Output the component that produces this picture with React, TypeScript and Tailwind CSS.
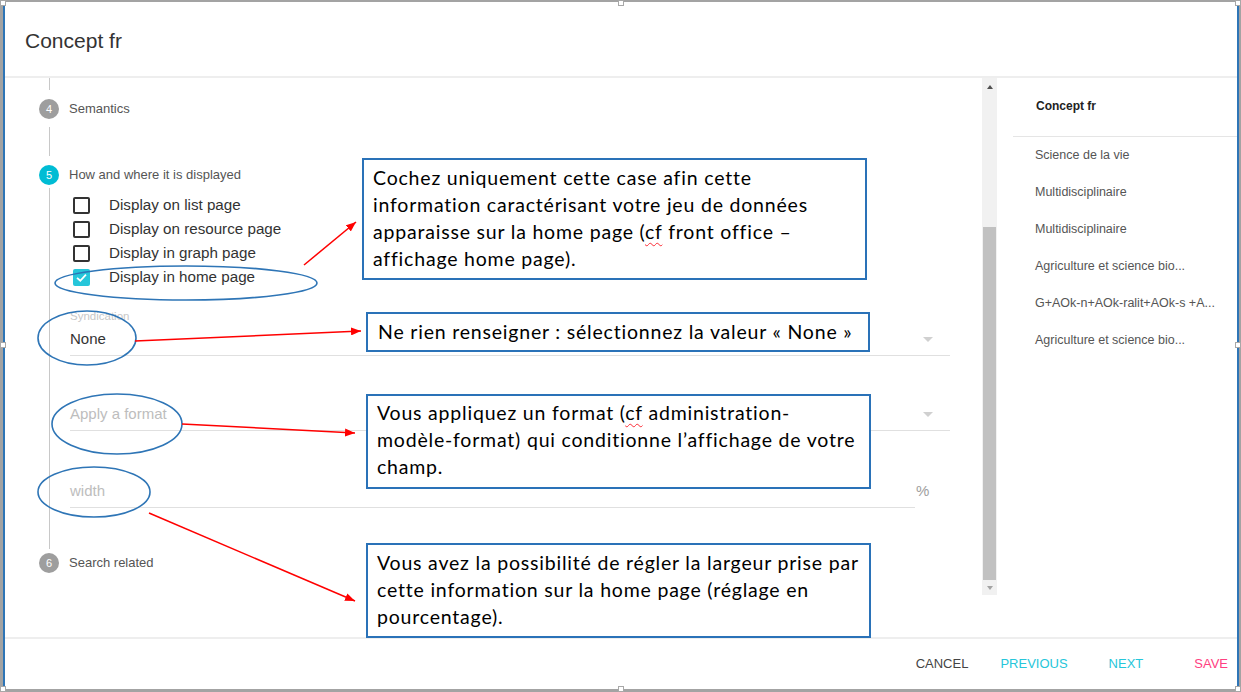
import type { ReactNode } from 'react';

const UI_FONT = { fontFamily: '"Liberation Sans", Arial, sans-serif' };
const NOTE_FONT = { fontFamily: 'Lato, "Open Sans", sans-serif' };

const CHECKS = [
  { label: 'Display on list page', checked: false },
  { label: 'Display on resource page', checked: false },
  { label: 'Display in graph page', checked: false },
  { label: 'Display in home page', checked: true },
];

const TAGS = [
  'Science de la vie',
  'Multidisciplinaire',
  'Multidisciplinaire',
  'Agriculture et science bio...',
  'G+AOk-n+AOk-ralit+AOk-s +A...',
  'Agriculture et science bio...',
];

/** Step bubble + label of the vertical stepper. */
function Step({ n, label, active }: { n: number; label: string; active?: boolean }): JSX.Element {
  return (
    <div className="flex h-5 items-center pl-[34px]">
      <div
        className={`grid h-5 w-5 place-items-center rounded-full text-[11px] text-white ${
          active ? 'bg-[#00bcd4]' : 'bg-[#9e9e9e]'
        }`}
      >
        {n}
      </div>
      <span className="ml-[10px] text-[13px] text-[#555]">{label}</span>
    </div>
  );
}

function Checkbox({ checked }: { checked: boolean }): JSX.Element {
  if (checked) {
    return (
      <div className="grid h-[17px] w-[17px] place-items-center rounded-[2px] bg-[#26c6da]">
        <svg width="13" height="13" viewBox="0 0 16 16" fill="none">
          <path d="M2.5 8.5 L6.5 12 L13.5 4.5" stroke="white" strokeWidth="2.2" />
        </svg>
      </div>
    );
  }
  return <div className="h-[17px] w-[17px] rounded-[2px] border-2 border-[#333]" />;
}

function Caret(): JSX.Element {
  return <div className="h-0 w-0 border-x-[5px] border-t-[5px] border-x-transparent border-t-[#d0d0d0]" />;
}

/** Material-ish text field: floating label row, value row, underline. */
function Field({
  label,
  value,
  placeholder,
  caret,
  width,
}: {
  label?: string;
  value?: string;
  placeholder?: string;
  caret?: boolean;
  width: string;
}): JSX.Element {
  return (
    <div className={`${width} border-b border-[#e0e0e0] pb-[6px]`}>
      <div className="h-[13px] text-[11.5px] leading-[13px] text-[#c8c8c8]">{label}</div>
      <div className="mt-[6px] flex h-5 items-center justify-between pr-[17px]">
        {value ? (
          <span className="text-[15px] text-[#333]">{value}</span>
        ) : (
          <span className="text-[15px] text-[#bdbdbd]">{placeholder}</span>
        )}
        {caret && <Caret />}
      </div>
    </div>
  );
}

function Note({ className, children }: { className: string; children: ReactNode }): JSX.Element {
  return (
    <div
      className={`absolute border-2 border-[#2a72b8] bg-white text-[19.5px] leading-[27px] tracking-[0.8px] whitespace-nowrap text-black ${className}`}
      style={NOTE_FONT}
    >
      {children}
    </div>
  );
}

function Cf(): JSX.Element {
  return <span className="underline decoration-red-500 decoration-wavy decoration-1 underline-offset-[3px]">cf</span>;
}

function Handle({ className }: { className: string }): JSX.Element {
  return <div className={`absolute h-[6px] w-[6px] border border-[#a8a8a8] bg-white ${className}`} />;
}

export default function App(): JSX.Element {
  return (
    <div className="relative h-[692px] w-[1241px] overflow-hidden bg-white" style={UI_FONT}>
      <div className="h-full border-t-2 border-r-2 border-b-[3px] border-l-[3px] border-[#a3a3a3]">
        <div className="flex h-full flex-col border-x-2 border-[#2e75b6]">
          {/* header */}
          <div className="flex h-[76px] shrink-0 items-center border-b-2 border-[#eeeeee] pt-[4px] pl-[20px] text-[21px] text-[#333]">
            Concept fr
          </div>

          {/* body */}
          <div className="flex min-h-0 flex-1">
            <div className="w-[977px] shrink-0 overflow-hidden">
              <div className="ml-[44px] h-[12px] border-l border-[#c8c8c8]" />
              <div className="mt-[9px]">
                <Step n={4} label="Semantics" />
              </div>
              <div className="mt-[8px] ml-[44px] h-[29px] border-l border-[#c8c8c8]" />
              <div className="mt-[9px]">
                <Step n={5} label="How and where it is displayed" active />
              </div>
              <div className="mt-[3px] ml-[44px] h-[361px] border-l border-[#c8c8c8]">
                <div className="pt-[5px] pl-[23px]">
                  {CHECKS.map((c) => (
                    <div key={c.label} className="flex h-6 items-center">
                      <Checkbox checked={c.checked} />
                      <span className="ml-[19px] text-[15.2px] text-[#333]">{c.label}</span>
                    </div>
                  ))}
                </div>
                <div className="pl-[20px]">
                  <div className="mt-[21px]">
                    <Field label="Syndication" value="None" caret width="w-[880px]" />
                  </div>
                  <div className="mt-[29px]">
                    <Field placeholder="Apply a format" caret width="w-[880px]" />
                  </div>
                  <div className="mt-[31px] flex items-end">
                    <Field placeholder="width" width="w-[845px]" />
                    <span className="mb-[6px] ml-[1px] text-[15px] text-[#9e9e9e]">%</span>
                  </div>
                </div>
              </div>
              <div className="mt-[4px]">
                <Step n={6} label="Search related" />
              </div>
            </div>

            {/* scrollbar */}
            <div className="flex h-[517px] w-[15px] shrink-0 flex-col bg-[#f1f1f1]">
              <div className="flex h-[17px] items-center justify-center">
                <div className="h-0 w-0 border-x-[3px] border-b-[4px] border-x-transparent border-b-[#505050]" />
              </div>
              <div className="h-[132px]" />
              <div className="mx-[1px] h-[353px] bg-[#c1c1c1]" />
              <div className="flex flex-1 items-center justify-center">
                <div className="h-0 w-0 border-x-[3px] border-t-[4px] border-x-transparent border-t-[#a3a3a3]" />
              </div>
            </div>

            {/* right panel */}
            <div className="ml-[16px] flex-1">
              <div className="flex h-[59px] items-center border-b border-[#e5e5e5] pb-[2px] pl-[23px] text-[12px] font-bold text-[#222]">
                Concept fr
              </div>
              {TAGS.map((t, i) => (
                <div key={i} className="flex h-[37px] items-center pl-[22px] text-[12.5px] text-[#555]">
                  {t}
                </div>
              ))}
            </div>
          </div>

          {/* footer */}
          <div className="flex h-[52px] shrink-0 items-center justify-end border-t-2 border-[#eeeeee] pr-[9px] text-[13px]">
            <span className="text-[#444]">CANCEL</span>
            <span className="ml-[32px] text-[#26c6da]">PREVIOUS</span>
            <span className="ml-[41px] text-[#26c6da]">NEXT</span>
            <span className="ml-[51px] text-[#ff4081]">SAVE</span>
          </div>
        </div>
      </div>

      {/* annotations */}
      <svg className="pointer-events-none absolute inset-0" width="1241" height="692">
        <defs>
          <marker id="arr" markerUnits="userSpaceOnUse" markerWidth="10" markerHeight="8" refX="10" refY="4" orient="auto">
            <path d="M0,0 L10,4 L0,8 z" fill="#ff0000" />
          </marker>
        </defs>
        <g fill="none" stroke="#2e75b6" strokeWidth="1.6">
          <ellipse cx="186" cy="283" rx="131" ry="17" />
          <ellipse cx="87" cy="338" rx="49" ry="27" />
          <ellipse cx="117" cy="424" rx="65" ry="30" />
          <ellipse cx="94" cy="492" rx="56" ry="25" />
        </g>
        <g stroke="#ff0000" strokeWidth="1.5">
          <line x1="304" y1="265" x2="356" y2="222" markerEnd="url(#arr)" />
          <line x1="135" y1="341" x2="361" y2="331" markerEnd="url(#arr)" />
          <line x1="182" y1="424" x2="355" y2="433" markerEnd="url(#arr)" />
          <line x1="149" y1="513" x2="355" y2="601" markerEnd="url(#arr)" />
        </g>
      </svg>

      <Note className="top-[158px] left-[362px] h-[122px] w-[505px] pt-[4px] pl-[9px]">
        Cochez uniquement cette case afin cette
        <br />
        information caractérisant votre jeu de données
        <br />
        apparaisse sur la home page (<Cf /> front office –
        <br />
        affichage home page).
      </Note>
      <Note className="top-[312px] left-[366px] h-[40px] w-[504px] pt-[4px] pl-[10px]">
        Ne rien renseigner : sélectionnez la valeur « None »
      </Note>
      <Note className="top-[394px] left-[366px] h-[95px] w-[505px] pt-[3px] pl-[9px]">
        Vous appliquez un format (<Cf /> administration-
        <br />
        modèle-format) qui conditionne l’affichage de votre
        <br />
        champ.
      </Note>
      <Note className="top-[543px] left-[366px] h-[95px] w-[505px] pt-[4px] pl-[9px]">
        Vous avez la possibilité de régler la largeur prise par
        <br />
        cette information sur la home page (réglage en
        <br />
        pourcentage).
      </Note>

      <Handle className="top-0 left-0" />
      <Handle className="top-0 left-[618px]" />
      <Handle className="top-0 left-[1235px]" />
      <Handle className="top-[342px] left-0" />
      <Handle className="top-[342px] left-[1235px]" />
      <Handle className="top-[686px] left-0" />
      <Handle className="top-[686px] left-[618px]" />
      <Handle className="top-[686px] left-[1235px]" />
    </div>
  );
}
